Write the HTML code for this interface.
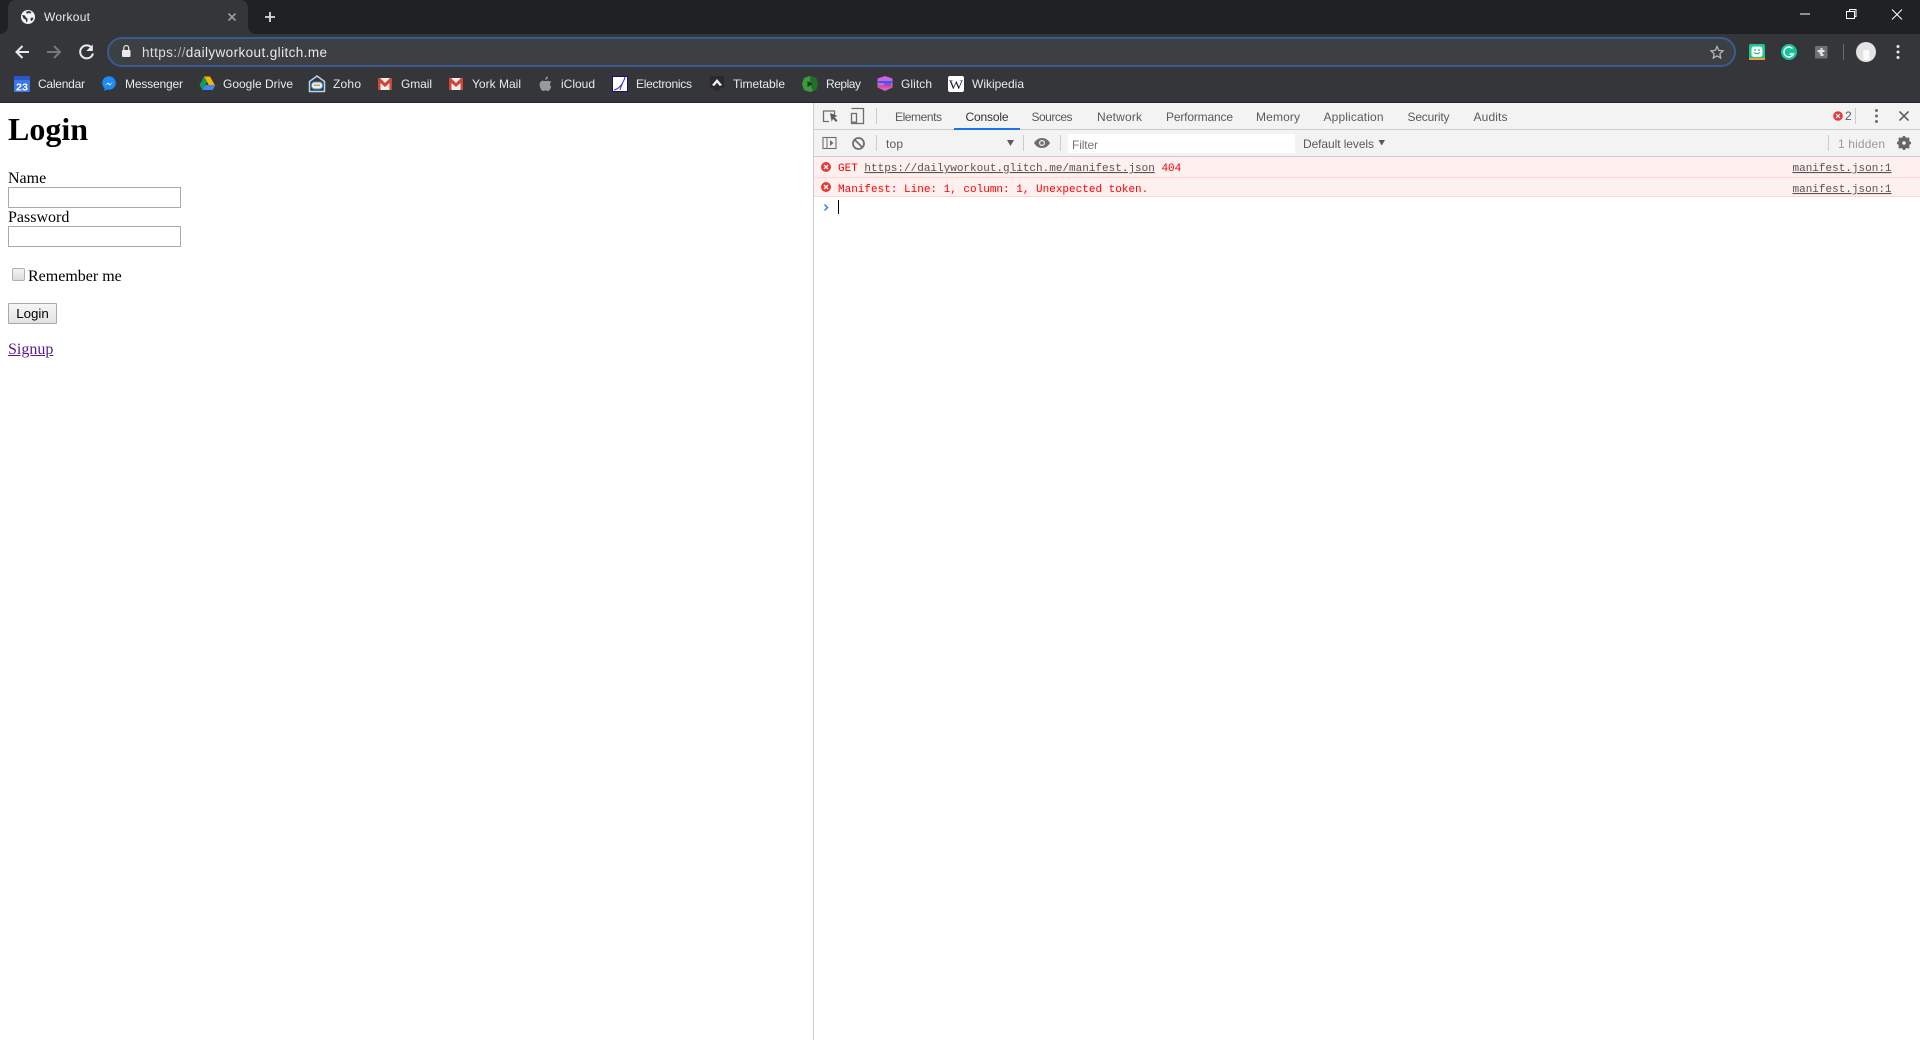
<!DOCTYPE html>
<html lang="en">
<head>
<meta charset="utf-8">
<title>Workout</title>
<style>
html,body{margin:0;padding:0;width:1920px;height:1040px;overflow:hidden;background:#fff}
svg{position:absolute;left:0;top:0}
text{font-family:"Liberation Sans",sans-serif;font-size:12px;white-space:pre}
.b{fill:#e8eaed}
.d{fill:#5a5a5a}
.m{font-family:"Liberation Mono",monospace;font-size:11px;fill:#f00}
.page{position:absolute;font-family:"Liberation Serif",serif;font-size:16px;line-height:18px;color:#000;white-space:nowrap}
h1{position:absolute;left:8px;top:111px;margin:0;font:bold 32px/37px "Liberation Serif",serif}
input.tx{position:absolute;left:8px;width:173px;height:21px;box-sizing:border-box;border:1px solid #a9a9a9;padding:0;margin:0;background:#fff}
.cb{position:absolute;left:12px;top:268px;width:13px;height:13px;box-sizing:border-box;border:1px solid #b0b0b0;border-radius:2px;background:linear-gradient(#f4f4f4,#dcdcdc)}
button{position:absolute;left:8px;top:303px;width:49px;height:21px;box-sizing:border-box;border:1px solid #a9a9a9;border-radius:1px;background:linear-gradient(#f6f6f6,#e2e2e2);font:13.33px/17px "Liberation Sans",sans-serif;color:#000;padding:0;margin:0}
a{color:#551a8b;text-decoration:underline}
</style>
</head>
<body>
<svg width="1920" height="1040" viewBox="0 0 1920 1040" xmlns="http://www.w3.org/2000/svg">
  <!-- title strip -->
  <rect x="0" y="0" width="1920" height="34" fill="#202124"/>
  <rect x="0" y="34" width="1920" height="68" fill="#35363a"/>
  <rect x="0" y="102" width="1920" height="1" fill="#27282b"/>
  <path d="M0 34H8V8a8 8 0 0 1 8-8H240a8 8 0 0 1 8 8V26a8 8 0 0 0 8 8H0Z" fill="#35363a"/>
  <path d="M0 34a8 8 0 0 0 8-8v8Z" fill="#35363a"/>
  <!-- favicon globe -->
  <circle cx="28" cy="17" r="7" fill="#f1f3f4"/>
  <path d="M22 15l3 .5 1 2 1.500 1v2.500l-1 1.500-1-3-2-1ZM28.500 11l2 .5 1 1.500-1.500.5-1.500-.8-.5 1-1.500-.5-.5-1.500ZM31.500 17.500l2 .3-1 2.500-1.500 1-.7-2.500Z" fill="#35363a"/>
  <text x="44" y="21" class="b" textLength="46" lengthAdjust="spacing">Workout</text>
  <path d="M228.500 13.500l7 7m0-7l-7 7" stroke="#9a9b9e" stroke-width="1.700" fill="none"/>
  <path d="M270 12v10M265 17h10" stroke="#dadce0" stroke-width="1.800" fill="none"/>

  <!-- window controls -->
  <path d="M1800 14h10" stroke="#fff" stroke-width="1"/>
  <path d="M1846.500 11.500h8v7h-8ZM1849.500 11V9.500h6.500v7h-1.500" stroke="#fff" stroke-width="1" fill="none"/>
  <path d="M1892 9.500l10 10m0-10l-10 10" stroke="#fff" stroke-width="1" fill="none"/>

  <!-- nav -->
  <path d="M29 52H17.500M22.500 46l-6 6 6 6" stroke="#e8eaed" stroke-width="2" fill="none"/>
  <path d="M47 52h12M54 46l6 6-6 6" stroke="#77787b" stroke-width="2" fill="none"/>
  <path d="M91.500 47.500a6.500 6.500 0 1 0 1.500 6" stroke="#e8eaed" stroke-width="2" fill="none"/>
  <path d="M92.800 44.500v6.500h-6.500Z" fill="#e8eaed"/>
  <!-- omnibox -->
  <rect x="108" y="38" width="1627" height="28" rx="14" fill="#3c4043" stroke="#3b5a94" stroke-width="2"/>
  <rect x="122" y="50" width="8.500" height="7" rx="1" fill="#e8eaed"/>
  <path d="M123.800 50v-2a2.400 2.400 0 0 1 4.900 0v2" stroke="#e8eaed" stroke-width="1.200" fill="none"/>
  <text x="142" y="57" style="font-size:13.500px" fill="#e8eaed" textLength="185" lengthAdjust="spacing"><tspan fill="#dcdee1">https:</tspan><tspan fill="#a8aaad">//</tspan>dailyworkout.glitch.me</text>
  <path d="M1717 46.500l1.800 3.900 4.200.5-3.100 2.900.8 4.200-3.700-2.100-3.700 2.100.8-4.200-3.100-2.900 4.200-.5Z" fill="none" stroke="#b4b6b9" stroke-width="1.300"/>
  <!-- extensions -->
  <rect x="1749" y="44" width="16" height="16" rx="2" fill="#24c58c"/>
  <rect x="1749" y="58" width="16" height="2" fill="#e9a23b"/>
  <rect x="1751.500" y="46.500" width="11" height="10.500" rx="2.500" fill="#f5fff9"/>
  <circle cx="1755" cy="50" r=".9" fill="#24a87a"/><circle cx="1759" cy="50" r=".9" fill="#24a87a"/>
  <path d="M1754 52.500q3 2.500 6 0" stroke="#24a87a" stroke-width="1" fill="none"/>
  <circle cx="1789" cy="52" r="8" fill="#15c39a"/>
  <path d="M1792.500 48.500a5 5 0 1 0 1 5.500h-4" stroke="#fff" stroke-width="1.400" fill="none"/>
  <rect x="1815" y="46" width="12.500" height="12.500" rx="1" fill="#6f7072"/>
  <path d="M1817.500 50h3v-2h2v2h2v2h-2v2h1v2h-3v-2h-1v-2h-2Z" fill="#e4e4e4"/>
  <rect x="1843" y="44" width="1" height="16" fill="#6a6b6e"/>
  <circle cx="1866" cy="52" r="10" fill="#e3e3e3"/>
  <path d="M1863 60c1-3 .5-5 0-8a3.500 3.500 0 0 1 6.500 0c0 3-.5 5 .5 8Z" fill="#fafafa"/>
  <circle cx="1898" cy="46.500" r="1.500" fill="#e8eaed"/><circle cx="1898" cy="52" r="1.500" fill="#e8eaed"/><circle cx="1898" cy="57.500" r="1.500" fill="#e8eaed"/>

  <!-- bookmarks icons -->
  <rect x="14" y="76" width="16" height="16" rx="1" fill="#3b78e7"/>
  <rect x="14" y="76" width="16" height="4" fill="#2a56c6"/>
  <text x="16" y="90.500" style="font-size:10px;font-weight:bold" fill="#fff" textLength="12" lengthAdjust="spacingAndGlyphs">23</text>

  <circle cx="109" cy="83" r="6.800" fill="#1b8cf5"/>
  <path d="M104 91l1-4 3 2Z" fill="#1b8cf5"/>
  <path d="M105 85.500l3-3 2 1.700 3-2.700-3 4-2-1.700Z" fill="#fff"/>

  <path d="M204 76.500h6l5 9h-6Z" fill="#f4b400"/>
  <path d="M204 76.500l3 5.400-4.500 8.100-3-5Z" fill="#0f9d58"/>
  <path d="M202.500 90l2.800-5h10.200l-2.800 5Z" fill="#4285f4"/>

  <path d="M317 76l7.500 5.500V91.500h-15V81.500Z" fill="none" stroke="#b9d6ee" stroke-width="1.500"/>
  <rect x="311.500" y="82" width="11" height="7" rx="3" fill="#e6eef5" stroke="#4a90c8" stroke-width="1"/>
  <rect x="314" y="84.500" width="6" height="1.500" fill="#e0a030"/>

  <rect x="378" y="78" width="14" height="12" fill="#eeeeee"/>
  <path d="M378 78h2l5 5 5-5h2v12h-2.500v-7l-4.500 4-4.500-4v7H378Z" fill="#d0453a"/>
  <rect x="449" y="78" width="14" height="12" fill="#eeeeee"/>
  <path d="M449 78h2l5 5 5-5h2v12h-2.500v-7l-4.500 4-4.500-4v7H449Z" fill="#d0453a"/>

  <path d="M546.500 81c1.500-.5 3 .3 4 0 .7 1 .3 1.500-.3 2.400-.6 1 0 2.500 1 3.300-.8 2.500-2 4.300-3.400 4.300-1 0-1.300-.6-2.400-.6s-1.400.6-2.300.6c-1.600 0-3.500-3.500-3.500-6.200 0-2.800 1.700-4 3.300-4 1 0 1.900.6 2.600.2ZM548 76.500c.2 1.800-1.200 3.400-2.800 3.300 0-1.700 1.200-3.200 2.800-3.300Z" fill="#9a9a9a"/>

  <rect x="612.500" y="76.500" width="15" height="15" fill="#fff" stroke="#11116e" stroke-width="1"/>
  <path d="M614 90c5-1 9-6 11-13M620 90c1-4 3-8 5-12" stroke="#3a3ab0" stroke-width="1" fill="none"/>

  <path d="M710 76h14v10.500l-7 5-7-5Z" fill="#2a2a2a"/>
  <path d="M712 85l5-6 5 6-2.200 1-2.800-3.200-2.800 3.200Z" fill="#f0f0f0"/>

  <path d="M810 76l6 2 2 6-2 6-6 2-6-2-2-6 2-6Z" fill="#3d9a3f"/>
  <path d="M810 76l6 2 2 6-2 6-3 1-3-7Z" fill="#1f6e2b"/>
  <path d="M807.500 81l5 3-5 3Z" fill="#123d18"/>

  <path d="M877.500 78.500l7.500-2.500 7.500 2.500v9l-7.500 3.500-7.500-3.500Z" fill="#ce62e0"/>
  <rect x="878" y="81" width="14" height="2" fill="#3a5be8"/>
  <rect x="878" y="85.500" width="14" height="2" fill="#e8486a"/>
  <rect x="884" y="83" width="7" height="2.500" fill="#7d4de8"/>

  <rect x="948" y="76" width="16" height="16" rx="2" fill="#fff"/>
  <text x="949" y="89" style="font-family:'Liberation Serif',serif;font-size:13px" fill="#222" textLength="14" lengthAdjust="spacingAndGlyphs">W</text>

  <!-- bookmark labels -->
  <g class="b">
    <text x="38" y="88" class="b" textLength="47" lengthAdjust="spacing">Calendar</text>
    <text x="125" y="88" class="b" textLength="58" lengthAdjust="spacing">Messenger</text>
    <text x="223" y="88" class="b" textLength="70" lengthAdjust="spacing">Google Drive</text>
    <text x="333" y="88" class="b" textLength="28" lengthAdjust="spacing">Zoho</text>
    <text x="401" y="88" class="b" textLength="31" lengthAdjust="spacing">Gmail</text>
    <text x="472" y="88" class="b" textLength="49" lengthAdjust="spacing">York Mail</text>
    <text x="561" y="88" class="b" textLength="34" lengthAdjust="spacing">iCloud</text>
    <text x="636" y="88" class="b" textLength="56" lengthAdjust="spacing">Electronics</text>
    <text x="733" y="88" class="b" textLength="52" lengthAdjust="spacing">Timetable</text>
    <text x="826" y="88" class="b" textLength="35" lengthAdjust="spacing">Replay</text>
    <text x="901" y="88" class="b" textLength="31" lengthAdjust="spacing">Glitch</text>
    <text x="972" y="88" class="b" textLength="52" lengthAdjust="spacing">Wikipedia</text>
  </g>

  <!-- devtools -->
  <rect x="813" y="103" width="1" height="937" fill="#cccccc"/>
  <rect x="814" y="103" width="1106" height="26" fill="#f3f3f3"/>
  <rect x="814" y="129" width="1106" height="1" fill="#cccccc"/>
  <rect x="814" y="130" width="1106" height="26" fill="#f3f3f3"/>
  <rect x="814" y="156" width="1106" height="1" fill="#cccccc"/>
  <rect x="954" y="128" width="66" height="2" fill="#1a73e8"/>

  <path d="M829 121.500h-5.500v-10.500h11v4" fill="none" stroke="#6e6e6e" stroke-width="1.300"/>
  <path d="M830 113l7.500 3-3 1.300 3 3.200-1.500 1.500-3-3.200-1.300 3Z" fill="#5a5a5a"/>
  <path d="M851.500 108.500h12v15h-7.500" fill="none" stroke="#6e6e6e" stroke-width="1.300"/>
  <rect x="851.500" y="113.500" width="5" height="10" fill="none" stroke="#6e6e6e" stroke-width="1.300"/>
  <rect x="851" y="121.500" width="6" height="2" fill="#6e6e6e"/>
  <rect x="876" y="108" width="1" height="16" fill="#cccccc"/>

  <text x="895" y="121" class="d" textLength="47" lengthAdjust="spacing">Elements</text>
  <text x="965.500" y="121" fill="#333" textLength="43" lengthAdjust="spacing">Console</text>
  <text x="1031.500" y="121" class="d" textLength="41" lengthAdjust="spacing">Sources</text>
  <text x="1097" y="121" class="d" textLength="45" lengthAdjust="spacing">Network</text>
  <text x="1166" y="121" class="d" textLength="67" lengthAdjust="spacing">Performance</text>
  <text x="1256" y="121" class="d" textLength="44" lengthAdjust="spacing">Memory</text>
  <text x="1323.500" y="121" class="d" textLength="60" lengthAdjust="spacing">Application</text>
  <text x="1407.500" y="121" class="d" textLength="42" lengthAdjust="spacing">Security</text>
  <text x="1473.500" y="121" class="d" textLength="34" lengthAdjust="spacing">Audits</text>

  <circle cx="1838" cy="116" r="4.800" fill="#e53935"/>
  <path d="M1836 114l4 4m0-4l-4 4" stroke="#fff" stroke-width="1.200"/>
  <text x="1845" y="120" fill="#5a5a5a">2</text>
  <rect x="1855" y="108" width="1" height="16" fill="#cccccc"/>
  <circle cx="1876.500" cy="110.500" r="1.500" fill="#6e6e6e"/><circle cx="1876.500" cy="116" r="1.500" fill="#6e6e6e"/><circle cx="1876.500" cy="121.500" r="1.500" fill="#6e6e6e"/>
  <path d="M1899.500 111.500l9 9m0-9l-9 9" stroke="#5f5f5f" stroke-width="1.600"/>

  <rect x="823" y="137.500" width="13" height="11" fill="none" stroke="#6e6e6e" stroke-width="1.100"/>
  <rect x="826.500" y="137" width="1" height="12" fill="#6e6e6e"/>
  <path d="M830 140l3.500 3-3.500 3Z" fill="#6e6e6e"/>
  <circle cx="858.500" cy="143.500" r="5.500" fill="none" stroke="#6e6e6e" stroke-width="1.800"/>
  <path d="M854.500 139.500l8 8" stroke="#6e6e6e" stroke-width="1.800"/>
  <rect x="876" y="135" width="1" height="16" fill="#cccccc"/>
  <text x="886" y="148" class="d" textLength="17" lengthAdjust="spacing">top</text>
  <path d="M1007 140h7l-3.500 6Z" fill="#5a5a5a"/>
  <rect x="1023" y="135" width="1" height="16" fill="#cccccc"/>
  <path d="M1034 143c2-3.500 5-5 8-5s6 1.500 8 5c-2 3.500-5 5-8 5s-6-1.500-8-5Z" fill="#6e6e6e"/>
  <circle cx="1042" cy="143" r="3" fill="#f3f3f3"/><circle cx="1042" cy="143" r="1.800" fill="#6e6e6e"/>
  <rect x="1060" y="135" width="1" height="16" fill="#cccccc"/>
  <rect x="1068" y="134" width="227" height="19" fill="#ffffff"/>
  <text x="1072" y="149" fill="#757575" textLength="26" lengthAdjust="spacing">Filter</text>
  <text x="1303" y="148" class="d" textLength="71" lengthAdjust="spacing">Default levels</text>
  <path d="M1378.500 140h6.500l-3.250 5.500Z" fill="#5a5a5a"/>
  <rect x="1828" y="135" width="1" height="16" fill="#cccccc"/>
  <text x="1838" y="148" fill="#9a9a9a" textLength="47" lengthAdjust="spacing">1 hidden</text>
  <circle cx="1904" cy="143" r="4.200" fill="none" stroke="#666" stroke-width="3.400"/>
  <path d="M1904 136v14M1897 143h14M1899 138l10 10M1909 138l-10 10" stroke="#666" stroke-width="2.400"/>
  <circle cx="1904" cy="143" r="1.800" fill="#f3f3f3"/>

  <!-- console rows -->
  <rect x="814" y="157" width="1106" height="20" fill="#fff0f0"/>
  <rect x="814" y="177" width="1106" height="1" fill="#ffd6d6"/>
  <rect x="814" y="178" width="1106" height="18" fill="#fff0f0"/>
  <rect x="814" y="196" width="1106" height="1" fill="#ffd6d6"/>
  <circle cx="826" cy="167" r="5" fill="#e53935"/>
  <path d="M824 165l4 4m0-4l-4 4" stroke="#fff" stroke-width="1.300"/>
  <circle cx="826" cy="187" r="5" fill="#e53935"/>
  <path d="M824 185l4 4m0-4l-4 4" stroke="#fff" stroke-width="1.300"/>
  <text x="838" y="171" class="m">GET <tspan fill="#545454" text-decoration="underline">https://dailyworkout.glitch.me/manifest.json</tspan> 404</text>
  <text x="838" y="192" class="m">Manifest: Line: 1, column: 1, Unexpected token.</text>
  <text x="1792.500" y="171" class="m" style="fill:#545454" text-decoration="underline">manifest.json:1</text>
  <text x="1792.500" y="192" class="m" style="fill:#545454" text-decoration="underline">manifest.json:1</text>
  <path d="M824.500 204.500l3 3-3 3" fill="none" stroke="#367cf1" stroke-width="1.500"/>
  <rect x="838" y="200" width="1" height="14" fill="#000"/>
</svg>

<h1>Login</h1>
<div class="page" style="left:8px;top:170px">Name</div>
<input class="tx" style="top:187px" type="text">
<div class="page" style="left:8px;top:209px">Password</div>
<input class="tx" style="top:226px" type="password">
<div class="cb"></div>
<div class="page" style="left:28px;top:268px">Remember me</div>
<button type="button">Login</button>
<div class="page" style="left:8px;top:341px"><a href="#">Signup</a></div>
</body>
</html>
